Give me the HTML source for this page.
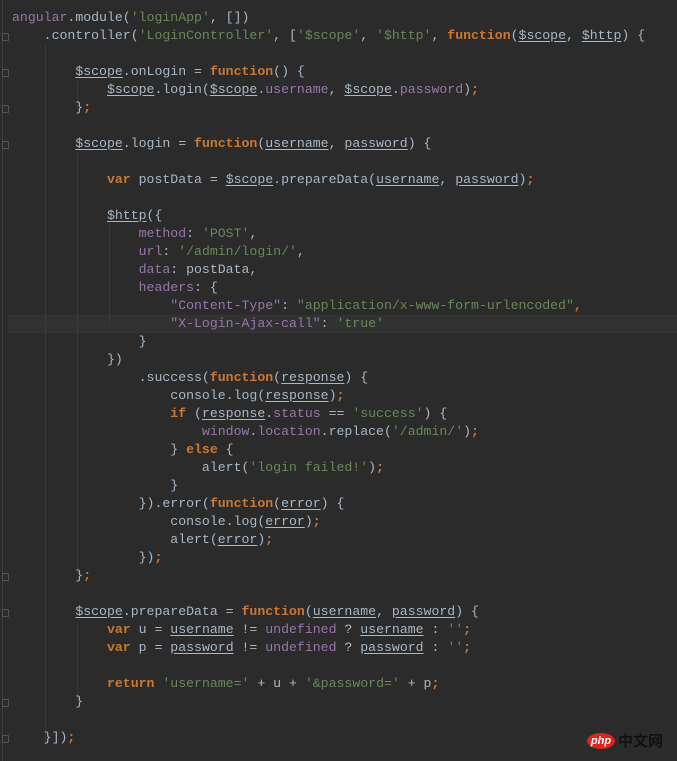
<!DOCTYPE html>
<html><head><meta charset="utf-8"><style>
html,body{margin:0;padding:0;background:#2b2b2b;width:677px;height:761px;overflow:hidden;position:relative}
pre{margin:0;position:absolute;left:12px;top:9px;font-family:"Liberation Mono",monospace;font-size:13.2px;line-height:18px;color:#a9b7c6;white-space:pre}
.k{color:#cc7832;font-weight:bold}
.s{color:#6a8759}
.p{color:#9876aa}
.u{text-decoration:underline;text-underline-offset:2px}
.hl{position:absolute;left:8px;right:0;top:315px;height:18px;background:#323232}
.gl{position:absolute;left:2px;top:0;width:1px;height:761px;background:#3c3c3c}
.ig{position:absolute;width:1px;background:#393939}
.fm{position:absolute;left:2px;width:7px;height:8px;border:1px solid #555;border-radius:1px;box-sizing:border-box}
.logo{position:absolute;left:587px;top:733px;width:28px;height:16px;border-radius:50%;background:#d9261c;color:#fff;font:italic bold 11px "Liberation Sans",sans-serif;text-align:center;line-height:16px}
.cn{position:absolute;left:618px;top:732px;font:bold 15px "Noto Sans CJK SC",sans-serif;color:#111;line-height:18px}
</style></head><body>
<div class="hl"></div>
<div class="gl"></div>
<div class="ig" style="left:45px;top:45px;height:700px"></div>
<div class="ig" style="left:77px;top:82px;height:26px"></div>
<div class="ig" style="left:77px;top:154px;height:420px"></div>
<div class="ig" style="left:77px;top:622px;height:80px"></div>
<div class="ig" style="left:109px;top:226px;height:100px"></div>
<div class="fm" style="top:33px"></div>
<div class="fm" style="top:69px"></div>
<div class="fm" style="top:105px"></div>
<div class="fm" style="top:141px"></div>
<div class="fm" style="top:573px"></div>
<div class="fm" style="top:609px"></div>
<div class="fm" style="top:699px"></div>
<div class="fm" style="top:735px"></div>
<pre><span class="p">angular</span>.module(<span class="s">'loginApp'</span>, [])
    .controller(<span class="s">'LoginController'</span>, [<span class="s">'$scope'</span>, <span class="s">'$http'</span>, <span class="k">function</span>(<span class="u">$scope</span>, <span class="u">$http</span>) {

        <span class="u">$scope</span>.onLogin = <span class="k">function</span>() {
            <span class="u">$scope</span>.login(<span class="u">$scope</span>.<span class="p">username</span>, <span class="u">$scope</span>.<span class="p">password</span>)<span class="k">;</span>
        }<span class="k">;</span>

        <span class="u">$scope</span>.login = <span class="k">function</span>(<span class="u">username</span>, <span class="u">password</span>) {

            <span class="k">var</span> postData = <span class="u">$scope</span>.prepareData(<span class="u">username</span>, <span class="u">password</span>)<span class="k">;</span>

            <span class="u">$http</span>({
                <span class="p">method</span>: <span class="s">'POST'</span>,
                <span class="p">url</span>: <span class="s">'/admin/login/'</span>,
                <span class="p">data</span>: postData,
                <span class="p">headers</span>: {
                    <span class="p">"Content-Type"</span>: <span class="s">"application/x-www-form-urlencoded"</span><span class="k">,</span>
                    <span class="p">"X-Login-Ajax-call"</span>: <span class="s">'true'</span>
                }
            })
                .success(<span class="k">function</span>(<span class="u">response</span>) {
                    console.log(<span class="u">response</span>)<span class="k">;</span>
                    <span class="k">if</span> (<span class="u">response</span>.<span class="p">status</span> == <span class="s">'success'</span>) {
                        <span class="p">window</span>.<span class="p">location</span>.replace(<span class="s">'/admin/'</span>)<span class="k">;</span>
                    } <span class="k">else</span> {
                        alert(<span class="s">'login failed!'</span>)<span class="k">;</span>
                    }
                }).error(<span class="k">function</span>(<span class="u">error</span>) {
                    console.log(<span class="u">error</span>)<span class="k">;</span>
                    alert(<span class="u">error</span>)<span class="k">;</span>
                })<span class="k">;</span>
        }<span class="k">;</span>

        <span class="u">$scope</span>.prepareData = <span class="k">function</span>(<span class="u">username</span>, <span class="u">password</span>) {
            <span class="k">var</span> u = <span class="u">username</span> != <span class="p">undefined</span> ? <span class="u">username</span> : <span class="s">''</span><span class="k">;</span>
            <span class="k">var</span> p = <span class="u">password</span> != <span class="p">undefined</span> ? <span class="u">password</span> : <span class="s">''</span><span class="k">;</span>

            <span class="k">return</span> <span class="s">'username='</span> + u + <span class="s">'&amp;password='</span> + p<span class="k">;</span>
        }

    }])<span class="k">;</span></pre>
<div class="logo">php</div>
<div class="cn">中文网</div>
</body></html>
